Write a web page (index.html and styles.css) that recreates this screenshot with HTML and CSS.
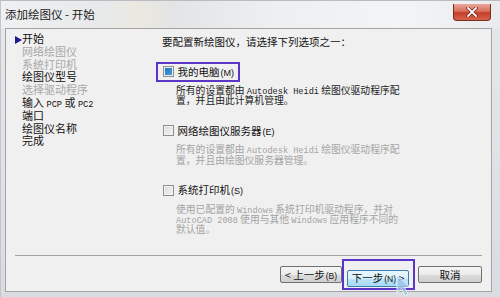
FILE: index.html
```html
<!DOCTYPE html>
<html lang="zh-CN">
<head>
<meta charset="utf-8">
<title>添加绘图仪 - 开始</title>
<link rel="stylesheet" href="styles.css">
</head>
<body>
<div class="window">
  <div class="titlebar">
    <span class="title">添加绘图仪 - 开始</span>
    <div class="close">
      <svg width="12" height="10" viewBox="0 0 12 10"><path d="M2 1 L10 9 M10 1 L2 9" stroke="#6b1d12" stroke-width="3.2" stroke-linecap="square"/><path d="M2 1 L10 9 M10 1 L2 9" stroke="#fff" stroke-width="1.8" stroke-linecap="square"/></svg>
    </div>
  </div>
  <div class="panel">
    <div class="body">
      <ul class="steps">
        <li class="cur"><span class="arrow"></span>开始</li>
        <li class="dis">网络绘图仪</li>
        <li class="dis">系统打印机</li>
        <li>绘图仪型号</li>
        <li class="dis">选择驱动程序</li>
        <li>输入 <span class="lat">PCP</span> 或 <span class="lat">PC2</span></li>
        <li>端口</li>
        <li>绘图仪名称</li>
        <li>完成</li>
      </ul>
      <div class="main">
        <p class="prompt">要配置新绘图仪，请选择下列选项之一：</p>
        <div class="option">
          <div class="opt-head sel"><span class="cb checked"></span><span class="label">我的电脑<span class="key">(M)</span></span></div>
          <p class="desc">所有的设置都由 <span class="lat">Autodesk Heidi</span> 绘图仪驱动程序配<br>置，并且由此计算机管理。</p>
        </div>
        <div class="option">
          <div class="opt-head"><span class="cb"></span><span class="label">网络绘图仪服务器<span class="key">(E)</span></span></div>
          <p class="desc dim">所有的设置都由 <span class="lat">Autodesk Heidi</span> 绘图仪驱动程序配<br>置，并且由绘图仪服务器管理。</p>
        </div>
        <div class="option">
          <div class="opt-head"><span class="cb"></span><span class="label">系统打印机<span class="key">(S)</span></span></div>
          <p class="desc dim">使用已配置的 <span class="lat">Windows</span> 系统打印机驱动程序，并对<br><span class="lat">AutoCAD 2008</span> 使用与其他 <span class="lat">Windows</span> 应用程序不同的<br>默认值。</p>
        </div>
      </div>
    </div>
    <div class="sep"></div>
    <div class="actions">
      <button class="btn">&lt; 上一步<span class="key">(B)</span></button>
      <div class="ring"><button class="btn next">下一步<span class="key">(N)</span> &gt;</button></div>
      <button class="btn cancel">取消</button>
    </div>
  </div>
  <svg class="cursor" width="16" height="24" viewBox="0 0 16 24"><path d="M1 1 L1 19 L5.5 14.5 L9 22 L12 20.6 L8.6 13.4 L14.5 13.4 Z" fill="#9cc3ea" fill-opacity="0.8" stroke="#ffffff" stroke-opacity="0.7" stroke-width="1"/></svg>
</div>
</body>
</html>
```

FILE: styles.css
```css
html, body {
  margin: 0;
  padding: 0;
}
body {
  width: 500px;
  height: 297px;
  overflow: hidden;
  background: linear-gradient(#e6e9ec, #d9dde1);
  font-family: "Noto Sans CJK SC", "Liberation Sans", sans-serif;
  color: #111;
}
.window {
  position: relative;
  height: 297px;
  display: flex;
  flex-direction: column;
  box-sizing: border-box;
  border-top: 1px solid #b8bcc0;
  border-left: 1px solid #c2c6ca;
}
.titlebar {
  height: 27px;
  flex: none;
  display: flex;
  justify-content: space-between;
  align-items: flex-start;
  padding: 0 9px 0 4px;
  background: linear-gradient(90deg, #eef0f1 0%, #e7e9ea 20%, #ebe8e0 28%, #e3e4e5 34%, #eeeff0 55%, #f3f4f5 80%, #e9ebec 100%);
}
.title {
  font-size: 11.5px;
  line-height: 14px;
  margin-top: 6px;
  color: #1a1a1a;
}
.close {
  width: 38px;
  height: 17px;
  box-sizing: border-box;
  margin-top: 3px;
  border: 1px solid #7d2b1f;
  border-top: none;
  border-radius: 0 0 4px 4px;
  background: linear-gradient(#e9a89a 0%, #d86f5c 45%, #c43e28 55%, #d5654c 100%);
  display: flex;
  align-items: center;
  justify-content: center;
}
.panel {
  flex: 1;
  margin: 0 8px 5px 4px;
  border: 1px solid #a4a4a4;
  background: #f0f0f0;
  display: flex;
  flex-direction: column;
}
.body {
  height: 226px;
  flex: none;
  display: flex;
}
.steps {
  list-style: none;
  margin: 0;
  padding: 3px 0 0 16px;
  width: 150px;
  box-sizing: border-box;
  font-size: 11px;
  line-height: 12.8px;
  color: #111;
}
.steps li {
  height: 12.8px;
}
.steps .dis {
  color: #a8a8a8;
}
.arrow {
  display: inline-block;
  width: 0;
  height: 0;
  margin-left: -7px;
  border-left: 7px solid #1b1b8f;
  border-top: 4px solid transparent;
  border-bottom: 4px solid transparent;
  vertical-align: -1px;
}
.lat {
  font-family: "Liberation Mono", monospace;
  font-size: 8.6px;
  line-height: 0;
}
.main {
  flex: 1;
  padding-top: 6px;
}
.prompt {
  margin: 0 0 9px 6px;
  font-size: 10.5px;
  line-height: 14px;
}
.opt-head {
  display: inline-flex;
  align-items: center;
  height: 20px;
  box-sizing: border-box;
  border: 2.5px solid transparent;
  padding: 0 4px 0 4.5px;
  gap: 4px;
  font-size: 10.5px;
  line-height: 14px;
}
.opt-head.sel {
  border-color: #5b34c8;
}
.key {
  font-family: "Liberation Sans", sans-serif;
  font-size: 9px;
  margin-left: 1px;
  line-height: 0;
}
.cb {
  width: 9px;
  height: 9px;
  flex: none;
  border: 1px solid #8e8f8f;
  background: linear-gradient(135deg, #d8d8d8, #f6f6f6);
  box-shadow: inset 0 0 0 1px #f2f2f2;
}
.cb.checked {
  background: linear-gradient(135deg, #1f6fb8, #4fa3e0);
  box-shadow: inset 0 0 0 1px #e9eef2;
}
.desc {
  margin: 3px 0 0 20px;
  font-size: 9.8px;
  line-height: 10.2px;
  color: #222;
}
.desc.dim {
  color: #a4a4a4;
}
.option + .option {
  margin-top: 12px;
}
.sep {
  height: 1px;
  flex: none;
  margin: 0 9px;
  background: #a3a3a3;
}
.actions {
  flex: 1;
  display: flex;
  justify-content: flex-end;
  align-items: flex-start;
  padding: 3px 9px 0 0;
}
.btn {
  width: 62px;
  height: 17px;
  margin-top: 7px;
  padding: 0;
  border: 1px solid #707070;
  border-radius: 2px;
  background: linear-gradient(#f6f6f6 0%, #ebebeb 50%, #dcdcdc 51%, #cfcfcf 100%);
  font-family: "Noto Sans CJK SC", sans-serif;
  font-size: 10.5px;
  line-height: 14px;
  color: #111;
}
.btn .key {
  font-size: 8.5px;
}
.ring {
  width: 73px;
  height: 31px;
  box-sizing: border-box;
  border: 2.5px solid #5b34c8;
  padding: 2px 0 0 3px;
  margin-right: 3px;
}
.ring .btn {
  margin-top: 2.5px;
}
.btn.next {
  border-color: #3c7fb1;
  background: linear-gradient(#eaf6fd 0%, #d9f0fc 50%, #bee6fd 51%, #a7d9f5 100%);
}
.btn.cancel {
  width: 64px;
}
.cursor {
  position: absolute;
  left: 395px;
  top: 273px;
}
```
